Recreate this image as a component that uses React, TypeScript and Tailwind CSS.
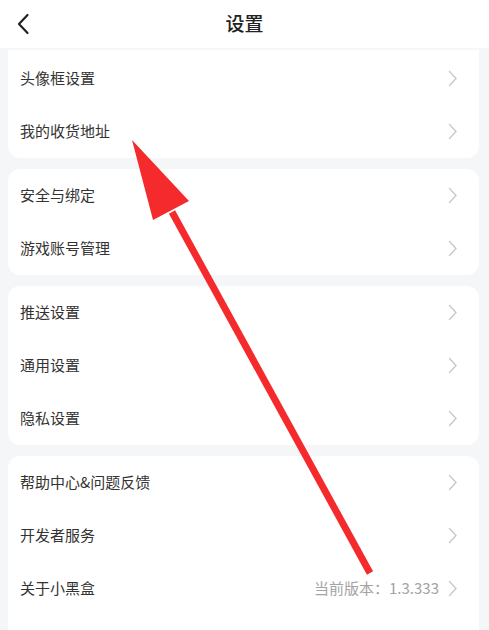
import React from "react";

type Fila = { titulo: string; extra?: string };

const grupos: Fila[][] = [
  [{ titulo: "头像框设置" }, { titulo: "我的收货地址" }],
  [{ titulo: "安全与绑定" }, { titulo: "游戏账号管理" }],
  [{ titulo: "推送设置" }, { titulo: "通用设置" }, { titulo: "隐私设置" }],
  [
    { titulo: "帮助中心&问题反馈" },
    { titulo: "开发者服务" },
    { titulo: "关于小黑盒", extra: "当前版本：1.3.333" },
  ],
];

function Flecha() {
  return (
    <svg width="10" height="17" viewBox="0 0 10 17" fill="none">
      <path d="M1.5 1.5 L8 8.5 L1.5 15.5" stroke="#c9c9cb" strokeWidth="1.4" strokeLinecap="round" strokeLinejoin="round" />
    </svg>
  );
}

export default function App() {
  return (
    <div
      className="relative w-[489px] h-[630px] overflow-hidden bg-[#f5f6f8]"
      style={{ fontFamily: '"Noto Sans CJK SC", "Noto Sans", sans-serif' }}
    >
      <div className="h-12 bg-white flex items-center justify-center relative pb-[3px]">
        <button className="absolute left-[14px] top-[11px] p-[2px]">
          <svg width="14" height="22" viewBox="0 0 14 22" fill="none">
            <path d="M11.5 2 L3 11 L11.5 20" stroke="#222" strokeWidth="2.2" strokeLinecap="round" strokeLinejoin="round" />
          </svg>
        </button>
        <h1 className="text-[19px] font-medium text-[#222] leading-none">设置</h1>
      </div>

      <div className="flex flex-col gap-[11px] pt-[2px] pl-2 pr-[10px]">
        {grupos.map((grupo, i) => (
          <div
            key={i}
            className={`bg-white ${i === 0 ? "rounded-b-[12px] pt-[2px]" : "rounded-[12px]"} ${i === grupos.length - 1 ? "pb-10" : ""}`}
          >
            {grupo.map((fila) => (
              <div key={fila.titulo} className="h-[53px] flex items-center pl-3 pr-[21px]">
                <span className="flex-1 text-[15px] text-[#333]">{fila.titulo}</span>
                {fila.extra && <span className="text-[15px] text-[#a3a3a3] mr-[9px]">{fila.extra}</span>}
                <Flecha />
              </div>
            ))}
          </div>
        ))}
      </div>

      <svg className="absolute inset-0 pointer-events-none" width="489" height="630" viewBox="0 0 489 630">
        <line x1="172" y1="212" x2="370" y2="573" stroke="#f42a2c" strokeWidth="7" />
        <polygon points="132,140 153,220 189,201" fill="#f42a2c" />
      </svg>
    </div>
  );
}
